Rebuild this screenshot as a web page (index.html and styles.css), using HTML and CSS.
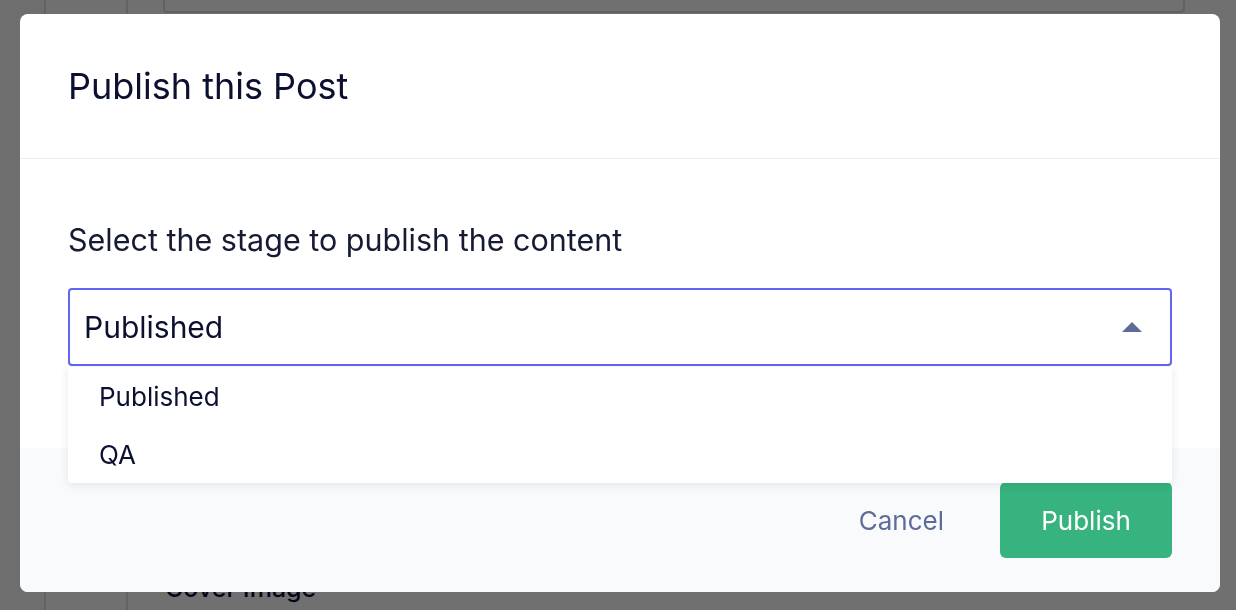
FILE: index.html
```html
<!DOCTYPE html>
<html lang="en">
<head>
<meta charset="utf-8">
<title>Publish this Post</title>
<link rel="stylesheet" href="styles.css">
</head>
<body>
<div class="page">
  <div class="rail"></div>
  <div class="nav"></div>
  <main class="main">
    <div class="topcard"></div>
    <div class="spacer"></div>
    <h2 class="section-title">Cover Image</h2>
  </main>
</div>
<div class="overlay"></div>
<div class="modal" role="dialog">
  <header class="modal-header">
    <h1 class="modal-title">Publish this Post</h1>
  </header>
  <section class="modal-body">
    <p class="field-label">Select the stage to publish the content</p>
    <div class="select">
      <div class="select-control">
        <span class="select-value">Published</span>
        <svg class="caret" width="20" height="10" viewBox="0 0 20 10"><path d="M0 10 L10 0 L20 10 Z" fill="#5f6b99"/></svg>
      </div>
      <ul class="menu">
        <li class="menu-item">Published</li>
        <li class="menu-item">QA</li>
      </ul>
    </div>
  </section>
  <footer class="modal-footer">
    <button class="btn-cancel">Cancel</button>
    <button class="btn-publish">Publish</button>
  </footer>
</div>
</body>
</html>
```
FILE: styles.css
```css
* { box-sizing: border-box; }
html, body { margin: 0; padding: 0; }
body {
  width: 1236px;
  height: 610px;
  overflow: hidden;
  font-family: Inter, "Noto Sans", "Liberation Sans", sans-serif;
  background: #ffffff;
}
.page {
  display: flex;
  height: 610px;
}
.rail {
  width: 46px;
  border-right: 2px solid #e2e2e2;
  background: #fafafa;
}
.nav {
  width: 82px;
  border-right: 2px solid #e2e2e2;
}
.main {
  flex: 1;
  padding: 0 51px 0 35px;
  display: flex;
  flex-direction: column;
}
.topcard {
  height: 13px;
  border: 2px solid #dcdcdc;
  border-top: 0;
  border-radius: 0 0 4px 4px;
}
.spacer { flex: 1; }
.section-title {
  margin: 0 0 2px 2px;
  font-size: 25px;
  font-weight: 500;
  color: #0a1033;
  line-height: 40px;
}
.overlay {
  position: fixed;
  inset: 0;
  background: rgba(0, 0, 0, 0.56);
}
.modal {
  position: fixed;
  left: 20px;
  top: 14px;
  width: 1200px;
  height: 578px;
  background: #ffffff;
  border-radius: 8px;
  overflow: hidden;
  display: flex;
  flex-direction: column;
}
.modal-header {
  height: 145px;
  padding: 0 48px;
  display: flex;
  align-items: center;
  border-bottom: 1px solid #eceef1;
}
.modal-title {
  margin: 0;
  font-size: 36px;
  font-weight: 400;
  color: #0b1030;
}
.modal-body {
  padding: 63px 48px 0;
  height: 289px;
}
.field-label {
  margin: 0 0 30px;
  font-size: 30.5px;
  line-height: 36px;
  color: #161a33;
}
.select {
  position: relative;
  z-index: 2;
}
.select-control {
  height: 78px;
  border: 2px solid #6366f1;
  border-radius: 4px;
  display: flex;
  align-items: center;
  justify-content: space-between;
  padding: 0 28px 0 14px;
}
.select-value {
  font-size: 30px;
  color: #0b1030;
}
.caret { display: block; }
.menu {
  position: absolute;
  left: 0;
  right: 0;
  top: 79px;
  margin: 0;
  padding: 0;
  list-style: none;
  background: #ffffff;
  box-shadow: 0 2px 10px rgba(20, 30, 60, 0.1);
  border-radius: 0 0 4px 4px;
}
.menu-item {
  height: 58px;
  display: flex;
  align-items: center;
  padding-left: 31px;
  font-size: 26px;
  color: #0b1030;
}
.modal-footer {
  flex: 1;
  background: #f9fafc;
  display: flex;
  align-items: center;
  justify-content: flex-end;
  padding: 0 48px;
  gap: 32px;
}
.btn-cancel {
  background: none;
  border: 0;
  padding: 0 24px;
  font-family: inherit;
  font-size: 26px;
  color: #5f6b99;
}
.btn-publish {
  width: 172px;
  height: 76px;
  border: 0;
  border-radius: 6px;
  background: #36b37e;
  color: #ffffff;
  font-family: inherit;
  font-size: 26px;
  font-weight: 400;
}
```
